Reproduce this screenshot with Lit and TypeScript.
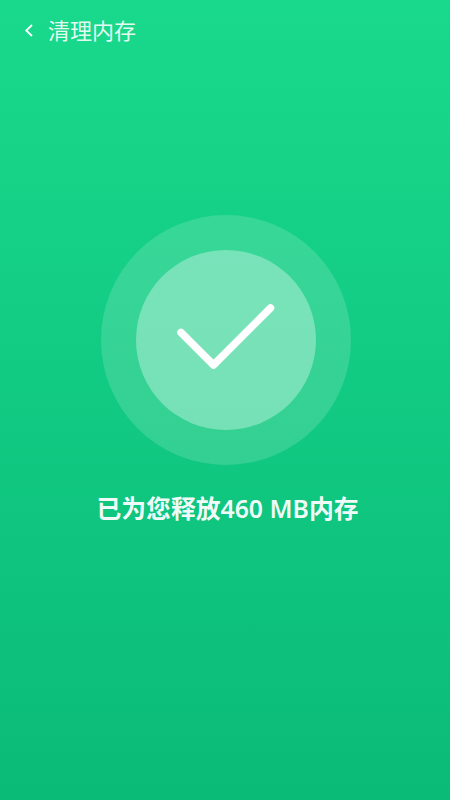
import { LitElement, html, css } from "lit";
import { customElement } from "lit/decorators.js";

@customElement("app-root")
export class AppRoot extends LitElement {
  static styles = css`
    :host {
      display: block;
      width: 450px;
      height: 800px;
      overflow: hidden;
      font-family: "Noto Sans", "Noto Sans CJK SC", sans-serif;
    }
    .page {
      height: 800px;
      box-sizing: border-box;
      background: linear-gradient(180deg, #19d98c 0%, #0abb78 100%);
      color: #fff;
      display: flex;
      flex-direction: column;
    }
    .bar {
      height: 62px;
      box-sizing: border-box;
      padding: 0 0 4px 23px;
      display: flex;
      align-items: center;
      gap: 15px;
    }
    .back { width: 10px; height: 15px; display: block; margin-top: 3px; }
    .title {
      font-family: "Noto Sans CJK SC", sans-serif;
      font-size: 22px;
      line-height: 30px;
      font-weight: 400;
      color: rgba(255, 255, 255, 0.9);
    }
    .main {
      display: flex;
      flex-direction: column;
      align-items: center;
      padding: 153px 0 0 2px;
    }
    .outer {
      width: 250px;
      height: 250px;
      border-radius: 50%;
      background: rgba(255, 255, 255, 0.15);
      display: flex;
      align-items: center;
      justify-content: center;
    }
    .inner {
      width: 180px;
      height: 180px;
      border-radius: 50%;
      background: rgba(255, 255, 255, 0.33);
      display: flex;
      align-items: center;
      justify-content: center;
    }
    .check { width: 180px; height: 180px; display: block; }
    .msg {
      margin: 25px 0 0 3px;
      font-size: 24.8px;
      line-height: 36px;
      font-weight: 600;
      white-space: nowrap;
      color: rgba(255, 255, 255, 0.96);
    }
  `;

  render() {
    return html`
      <div class="page">
        <div class="bar">
          <svg class="back" viewBox="0 0 10 15" fill="none" stroke="#fff" stroke-width="1.8">
            <path d="M9 2 L3.2 7.5 L9 13" />
          </svg>
          <span class="title">清理内存</span>
        </div>
        <div class="main">
          <div class="outer">
            <div class="inner">
              <svg class="check" viewBox="0 0 180 180" fill="none" stroke="#fff"
                stroke-width="7.5" stroke-linecap="round" stroke-linejoin="round">
                <path d="M45 82.5 L77.5 115 L134.5 58" />
              </svg>
            </div>
          </div>
          <div class="msg">已为您释放460 MB内存</div>
        </div>
      </div>
    `;
  }
}
